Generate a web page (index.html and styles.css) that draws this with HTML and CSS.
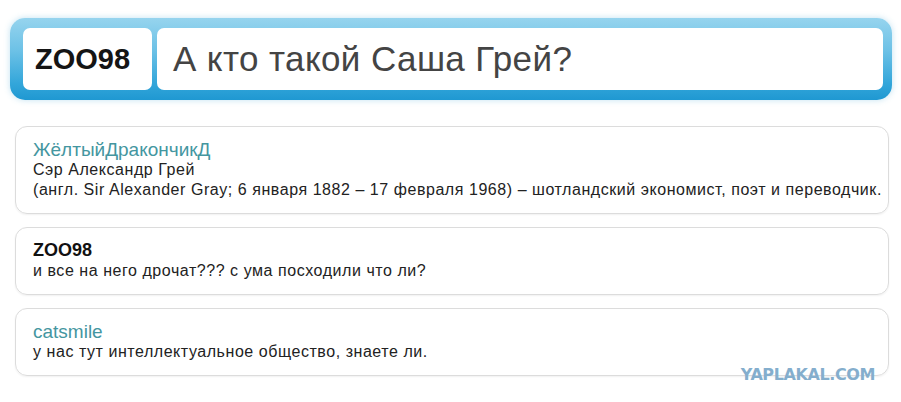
FILE: index.html
```html
<!DOCTYPE html>
<html>
	<head>
		<meta charset="utf-8" />
		<meta name="viewport" content="width=device-width, initial-scale=1" />
		<title>А кто такой Саша Грей?</title>
		<link rel="stylesheet" href="styles.css">
	</head>
	<body>
		<div class="page">
			<!-- topic header: author + question -->
			<div class="topic">
				<div class="topic-author">ZOO98</div>
				<div class="topic-title">А кто такой Саша Грей?</div>
			</div>

			<div class="comments">
				<div class="comment">
					<div class="nick">ЖёлтыйДракончикД</div>
					<div class="text">Сэр Александр Грей</div>
					<div class="text">(англ. Sir Alexander Gray; 6 января 1882 – 17 февраля 1968) – шотландский экономист, поэт и переводчик.</div>
				</div>
				<div class="comment">
					<div class="nick nick-op">ZOO98</div>
					<div class="text">и все на него дрочат??? с ума посходили что ли?</div>
				</div>
				<div class="comment">
					<div class="nick">catsmile</div>
					<div class="text">у нас тут интеллектуальное общество, знаете ли.</div>
				</div>
			</div>

			<div class="watermark">YAPLAKAL.COM</div>
		</div>
	</body>
</html>
```

FILE: styles.css
```css
body {
    margin: 0;
    background-color: #fff;
    font-family: "Liberation Sans", Arial, sans-serif;
}

.page {
    position: relative;
    width: 901px;
    height: 402px;
    padding-top: 18px;
    box-sizing: border-box;
}

/* blue framed header */
.topic {
    display: flex;
    gap: 5px;
    height: 82px;
    box-sizing: border-box;
    margin: 0 9px 0 10px;
    padding: 10px 9px 10px 13px;
    border-radius: 15px;
    background: linear-gradient(to bottom, #96d4ee 0%, #6cc1e6 40%, #33a6da 80%, #1f98d2 100%);
    box-shadow: 0 0 6px rgba(120, 190, 225, 0.45);
}

.topic-author {
    width: 129px;
    display: flex;
    align-items: center;
    padding-left: 12px;
    box-sizing: border-box;
    background-color: #fff;
    border-radius: 7px;
    font-size: 29px;
    font-weight: bold;
    color: #151515;
}

.topic-title {
    flex: 1;
    display: flex;
    align-items: center;
    padding-left: 16px;
    background-color: #fff;
    border-radius: 7px;
    font-size: 35px;
    letter-spacing: 0.4px;
    color: #444;
}

.comments {
    display: flex;
    flex-direction: column;
    gap: 13px;
    margin: 26px 12px 0 15px;
}

.comment {
    border: 1px solid #dcdcdc;
    border-radius: 12px;
    padding: 12px 4px 13px 17px;
    box-shadow: 0 1px 2px rgba(0, 0, 0, 0.06);
    font-size: 16px;
    line-height: 20px;
    letter-spacing: 0.55px;
    white-space: nowrap;
    color: #222;
}

.nick {
    font-size: 19px;
    line-height: 21px;
    letter-spacing: 0;
    color: #4496a0;
}

.nick-op {
    color: #111;
    font-weight: bold;
    font-size: 18px;
}

/* site watermark stamped over the last comment */
.watermark {
    position: absolute;
    right: 26px;
    bottom: 18px;
    font-family: "DejaVu Sans", sans-serif;
    font-weight: bold;
    font-size: 16px;
    letter-spacing: -0.4px;
    color: #84aecd;
}
```
